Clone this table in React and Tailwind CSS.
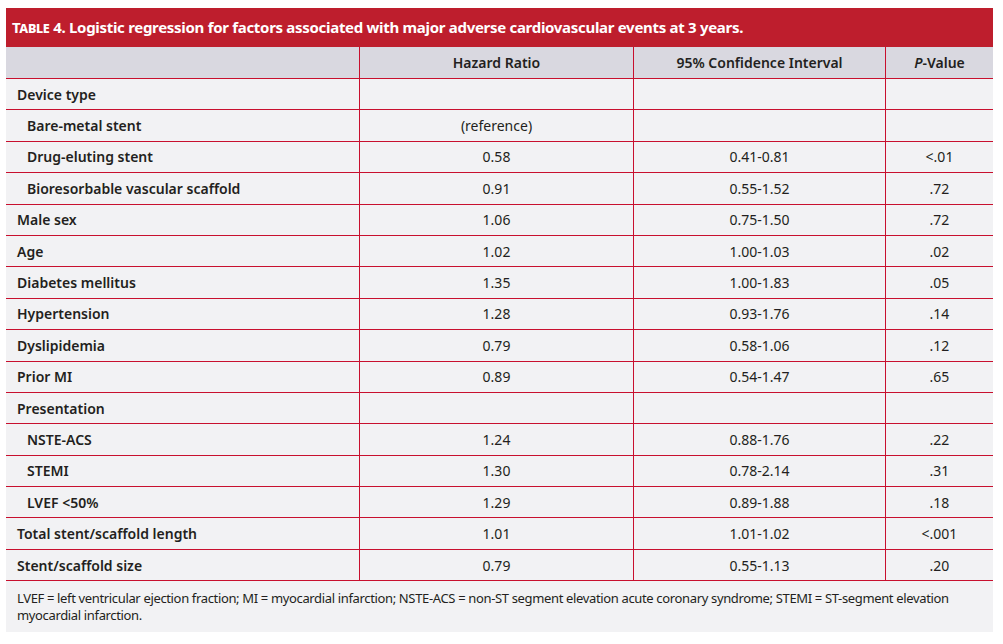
const rows = [
  { label: "Device type", indent: false, hr: "", ci: "", p: "" },
  { label: "Bare-metal stent", indent: true, hr: "(reference)", ci: "", p: "" },
  { label: "Drug-eluting stent", indent: true, hr: "0.58", ci: "0.41-0.81", p: "<.01" },
  { label: "Bioresorbable vascular scaffold", indent: true, hr: "0.91", ci: "0.55-1.52", p: ".72" },
  { label: "Male sex", indent: false, hr: "1.06", ci: "0.75-1.50", p: ".72" },
  { label: "Age", indent: false, hr: "1.02", ci: "1.00-1.03", p: ".02" },
  { label: "Diabetes mellitus", indent: false, hr: "1.35", ci: "1.00-1.83", p: ".05" },
  { label: "Hypertension", indent: false, hr: "1.28", ci: "0.93-1.76", p: ".14" },
  { label: "Dyslipidemia", indent: false, hr: "0.79", ci: "0.58-1.06", p: ".12" },
  { label: "Prior MI", indent: false, hr: "0.89", ci: "0.54-1.47", p: ".65" },
  { label: "Presentation", indent: false, hr: "", ci: "", p: "" },
  { label: "NSTE-ACS", indent: true, hr: "1.24", ci: "0.88-1.76", p: ".22" },
  { label: "STEMI", indent: true, hr: "1.30", ci: "0.78-2.14", p: ".31" },
  { label: "LVEF <50%", indent: true, hr: "1.29", ci: "0.89-1.88", p: ".18" },
  { label: "Total stent/scaffold length", indent: false, hr: "1.01", ci: "1.01-1.02", p: "<.001" },
  { label: "Stent/scaffold size", indent: false, hr: "0.79", ci: "0.55-1.13", p: ".20" },
]

const App = () => {
  return (
    <div className="w-[1003px] h-[644px] bg-white pt-[8px] pl-[6px] font-['Noto_Sans',sans-serif] text-[#231f20]">
      <div className="w-[987px]">
        {/* title bar */}
        <div className="h-[39px] bg-[#be1e2d] flex items-center pl-[6px] text-white font-bold text-[15px] tracking-[-0.3px]">
          <span className="[font-variant:small-caps]">Table</span>
          <span>&nbsp;4. Logistic regression for factors associated with major adverse cardiovascular events at 3 years.</span>
        </div>

        {/* column headers */}
        <div className="grid grid-cols-[354px_274px_252px_107px] h-[32px] bg-[#d9d8e0] border-b border-[#c8102e] font-semibold text-[14px]">
          <div className="border-r border-[#c8102e]"></div>
          <div className="border-r border-[#c8102e] flex items-center justify-center">Hazard Ratio</div>
          <div className="border-r border-[#c8102e] flex items-center justify-center">95% Confidence Interval</div>
          <div className="flex items-center justify-center"><i>P</i>-Value</div>
        </div>

        {/* body */}
        <div className="bg-[#f2f2f4]">
          {rows.map((r, i) => (
            <div key={i} className="grid grid-cols-[354px_274px_252px_107px] h-[31.4px] border-b border-[#c8102e] text-[14px]">
              <div className={"border-r border-[#c8102e] flex items-center font-semibold " + (r.indent ? "pl-[21px]" : "pl-[11px]")}>{r.label}</div>
              <div className="border-r border-[#c8102e] flex items-center justify-center">{r.hr}</div>
              <div className="border-r border-[#c8102e] flex items-center justify-center">{r.ci}</div>
              <div className="flex items-center justify-center">{r.p}</div>
            </div>
          ))}
          <div className="h-[51px] pl-[11px] pr-[20px] pt-[9px] text-[13px] leading-[17px] tracking-[-0.35px]">
            LVEF = left ventricular ejection fraction; MI = myocardial infarction; NSTE-ACS = non-ST segment elevation acute coronary syndrome; STEMI = ST-segment elevation myocardial infarction.
          </div>
        </div>
      </div>
    </div>
  )
}

export default App
